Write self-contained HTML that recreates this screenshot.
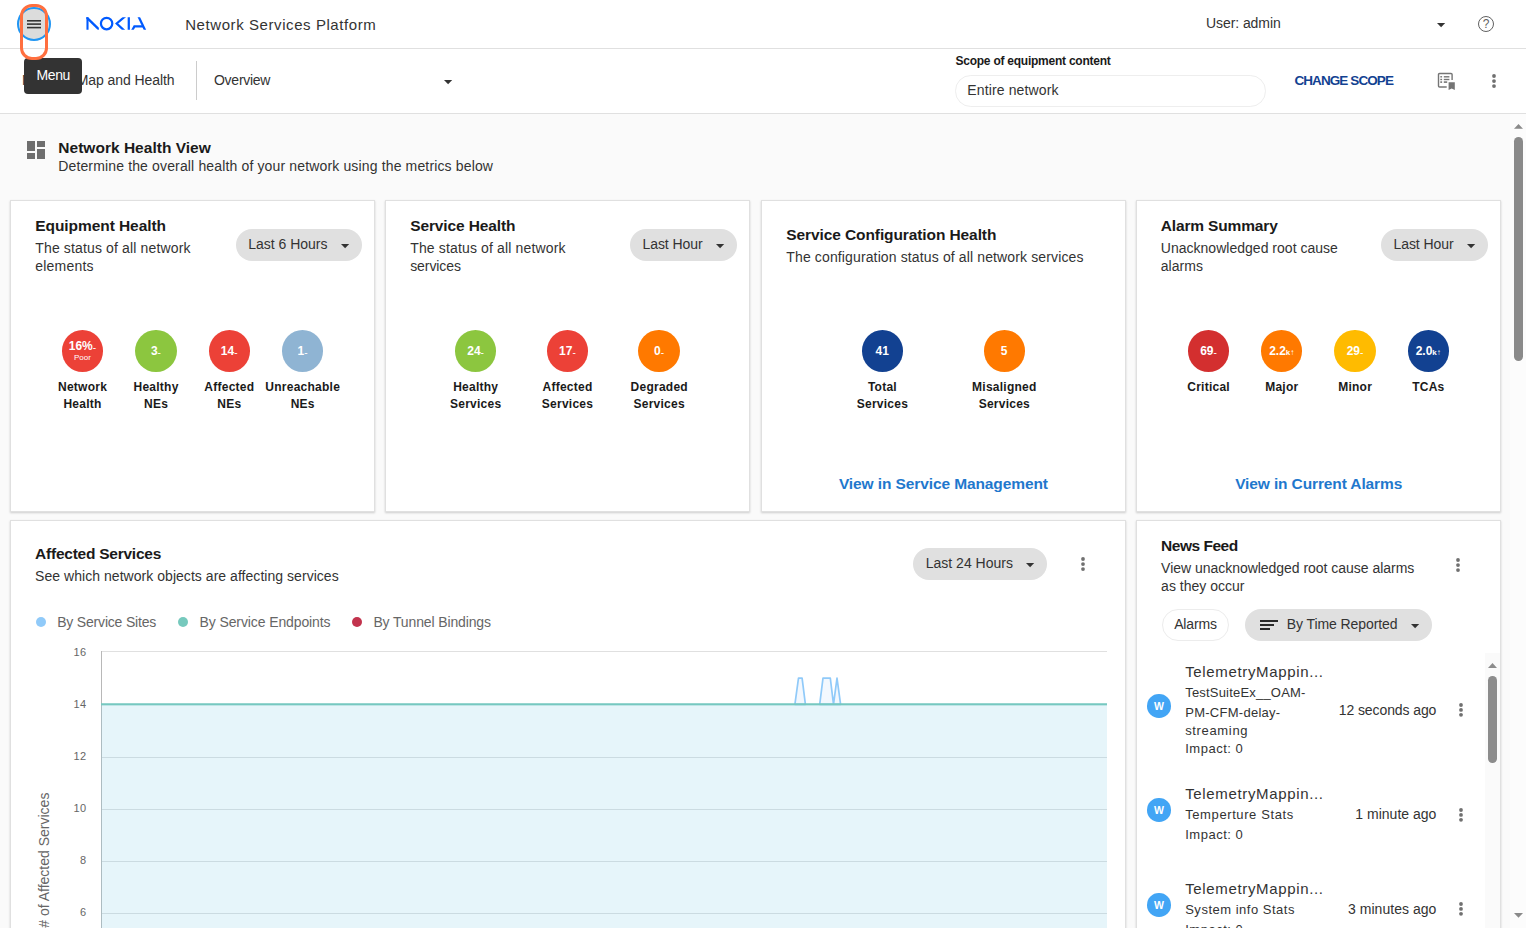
<!DOCTYPE html>
<html lang="en"><head><meta charset="utf-8"><title>Network Services Platform</title>
<style>
html,body{margin:0;padding:0}
html{overflow:hidden}
body{width:1526px;height:928px;overflow:hidden;position:relative;background:#fafafa;font-family:'Liberation Sans', sans-serif;}
#root{position:absolute;left:0;top:0;width:1526px;height:928px;overflow:hidden;background:#fafafa}
.t{position:absolute;white-space:pre;}
.a{position:absolute;}
.card{position:absolute;background:#fff;border:1px solid #e0e0e0;box-sizing:border-box;box-shadow:0 1px 2px rgba(0,0,0,.18);}
.pill{position:absolute;background:#e0e0e0;border-radius:16px;}
.circ{position:absolute;border-radius:50%;width:41.4px;height:42px;}
svg{position:absolute;overflow:visible}

</style></head><body><div id="root">
<div class="a" style="left:0;top:0;width:1526px;height:48px;background:#fff;border-bottom:1px solid #e0e0e0"></div>
<div class="a" style="left:0;top:49px;width:1526px;height:64px;background:#fff;border-bottom:1px solid #e0e0e0"></div>
<div class="a" style="left:17px;top:6.6px;width:34px;height:34px;box-sizing:border-box;border-radius:50%;background:#dcdcdc;border:2px solid #2196f3"></div>
<svg style="left:27px;top:19.8px" width="14" height="9" viewBox="0 0 14 9"><rect x="0" y="0" width="14" height="1.6" fill="#333"/><rect x="0" y="3.3" width="14" height="1.6" fill="#333"/><rect x="0" y="6.8" width="14" height="1.6" fill="#333"/></svg>
<div class="a" style="left:20px;top:4px;width:28px;height:55.8px;box-sizing:border-box;border:3px solid #ff6f3f;border-radius:12px;z-index:7"></div>
<svg role="img" aria-label="NOKIA" style="left:86px;top:17px" width="61" height="13.4" viewBox="0 0 61 13.4" fill="none" stroke="#005aff" stroke-width="2.25"><title>NOKIA</title>
<defs><clipPath id="lc"><rect x="0.2" y="0.2" width="60.2" height="12.55"/></clipPath><clipPath id="ln"><rect x="0.2" y="0.2" width="12.65" height="12.55"/></clipPath></defs>
<g clip-path="url(#ln)"><line x1="1.4" y1="-1" x2="1.4" y2="14"/><line x1="-0.4" y1="-0.6" x2="14" y2="13.5" stroke-width="2.35"/></g>
<circle cx="20.6" cy="6.6" r="5.7"/><g clip-path="url(#lc)">
<polyline points="39.6,-1 30.7,6.5 38.7,14" stroke-linejoin="miter"/>
<line x1="42.8" y1="-1" x2="42.8" y2="14"/>
<polyline points="45.9,14 48.4,9.35 57,9.35"/><line x1="52.3" y1="-1" x2="59.5" y2="14"/></g>
</svg>
<svg style="left:1436.80px;top:23.15px" width="8.2" height="4.3" viewBox="0 0 8.2 4.3"><polygon points="0,0 8.2,0 4.1,4.3" fill="#333"/></svg>
<div class="a" style="left:1477.8px;top:15.6px;width:16.6px;height:16.6px;box-sizing:border-box;border:1.7px solid #616161;border-radius:50%"></div>
<div class="a" style="left:24px;top:58px;width:58px;height:36px;background:#333;border-radius:4px;z-index:5"></div>
<div class="a" style="left:196px;top:61px;width:1px;height:39px;background:#ccc"></div>
<svg style="left:443.90px;top:79.85px" width="8.2" height="4.3" viewBox="0 0 8.2 4.3"><polygon points="0,0 8.2,0 4.1,4.3" fill="#333"/></svg>
<div class="a" style="left:954.5px;top:75px;width:311.5px;height:31.5px;box-sizing:border-box;background:#fff;border:1px solid #eeeeee;border-radius:15.75px"></div>
<svg style="left:1437px;top:72px" width="19" height="19" viewBox="0 0 19 19"><path d="M15.1 8V2.6a1.1 1.1 0 0 0-1.1-1.1H2.6a1.1 1.1 0 0 0-1.1 1.1v11.3a1.1 1.1 0 0 0 1.1 1.1H9.7" fill="none" stroke="#757575" stroke-width="1.4"/>
<g fill="#757575"><rect x="3.3" y="4.1" width="1.8" height="1.4"/><rect x="3.3" y="6.8" width="1.8" height="1.4"/><rect x="3.3" y="9.3" width="1.8" height="1.6"/><rect x="6.8" y="4.1" width="5.6" height="1.4"/><rect x="6.8" y="6.8" width="5.6" height="1.4"/><rect x="6.8" y="9.3" width="3.4" height="1.6"/>
<path d="M11.6 10.2h6.2v7.8l-3.1-1.5-3.1 1.5z"/></g></svg>
<svg style="left:1491px;top:72.95px" width="6" height="16.1" viewBox="0 0 6 16.1"><circle cx="3" cy="3" r="1.9" fill="#707070"/><circle cx="3" cy="8.05" r="1.9" fill="#707070"/><circle cx="3" cy="13.1" r="1.9" fill="#707070"/></svg>
<svg style="left:24px;top:138px" width="24" height="24" viewBox="0 0 24 24"><path d="M3 13h8V3H3v10zm0 8h8v-6H3v6zm10 0h8V11h-8v10zm0-18v6h8V3h-8z" fill="#6e6e6e"/></svg>
<div class="card" style="left:10px;top:200px;width:365px;height:312px"></div>
<div class="card" style="left:385px;top:200px;width:365px;height:312px"></div>
<div class="card" style="left:761px;top:200px;width:365px;height:312px"></div>
<div class="card" style="left:1136px;top:200px;width:365px;height:312px"></div>
<div class="pill" style="left:235.75px;top:229px;width:125.75px;height:32.00px"></div>
<svg style="left:340.80px;top:243.95px" width="8.2" height="4.3" viewBox="0 0 8.2 4.3"><polygon points="0,0 8.2,0 4.1,4.3" fill="#333"/></svg>
<div class="circ" style="left:61.70px;top:330px;background:#ec4137"></div>
<div class="circ" style="left:135.20px;top:330px;background:#8cc63f"></div>
<div class="circ" style="left:208.50px;top:330px;background:#ec4137"></div>
<div class="circ" style="left:281.90px;top:330px;background:#8fb4d3"></div>
<div class="pill" style="left:630px;top:229px;width:106.60px;height:32.00px"></div>
<svg style="left:715.70px;top:243.95px" width="8.2" height="4.3" viewBox="0 0 8.2 4.3"><polygon points="0,0 8.2,0 4.1,4.3" fill="#333"/></svg>
<div class="circ" style="left:454.90px;top:330px;background:#8cc63f"></div>
<div class="circ" style="left:546.70px;top:330px;background:#ec4137"></div>
<div class="circ" style="left:638.40px;top:330px;background:#ff7900"></div>
<div class="circ" style="left:861.60px;top:330px;background:#124191"></div>
<div class="circ" style="left:983.50px;top:330px;background:#ff7900"></div>
<div class="pill" style="left:1380.9px;top:229px;width:107.10px;height:32.00px"></div>
<svg style="left:1466.80px;top:243.95px" width="8.2" height="4.3" viewBox="0 0 8.2 4.3"><polygon points="0,0 8.2,0 4.1,4.3" fill="#333"/></svg>
<div class="circ" style="left:1187.80px;top:330px;background:#d32f2f"></div>
<div class="circ" style="left:1261.00px;top:330px;background:#ff7900"></div>
<div class="circ" style="left:1334.30px;top:330px;background:#ffbb00"></div>
<div class="circ" style="left:1407.50px;top:330px;background:#124191"></div>
<div class="card" style="left:10px;top:520px;width:1116px;height:440px"></div>
<div class="card" style="left:1136px;top:520px;width:365px;height:440px"></div>
<div class="pill" style="left:913.1px;top:548px;width:133.7px;height:32px"></div>
<svg style="left:1025.90px;top:562.85px" width="8.2" height="4.3" viewBox="0 0 8.2 4.3"><polygon points="0,0 8.2,0 4.1,4.3" fill="#333"/></svg>
<svg style="left:1079.9px;top:555.95px" width="6" height="16.1" viewBox="0 0 6 16.1"><circle cx="3" cy="3" r="1.9" fill="#707070"/><circle cx="3" cy="8.05" r="1.9" fill="#707070"/><circle cx="3" cy="13.1" r="1.9" fill="#707070"/></svg>
<div class="a" style="left:36px;top:616.7px;width:10px;height:10px;border-radius:50%;background:#90caf9"></div>
<div class="a" style="left:177.9px;top:616.7px;width:10px;height:10px;border-radius:50%;background:#76c9bd"></div>
<div class="a" style="left:351.8px;top:616.7px;width:10px;height:10px;border-radius:50%;background:#c2334d"></div>
<svg style="left:0;top:0" width="1526" height="928" viewBox="0 0 1526 928"><rect x="102" y="651" width="1005.00" height="1" fill="#e0e0e0"/><rect x="101" y="651" width="1" height="290" fill="#b8b8b8"/><rect x="101" y="704.3" width="1006.00" height="240" fill="#80cde6" fill-opacity="0.2"/><rect x="102" y="757" width="1005.00" height="1" fill="#cbdbe1"/><rect x="102" y="809" width="1005.00" height="1" fill="#cbdbe1"/><rect x="102" y="861" width="1005.00" height="1" fill="#cbdbe1"/><rect x="102" y="913" width="1005.00" height="1" fill="#cbdbe1"/><path d="M794.9 704.30L798.5 678.10L802.1 678.10L805.4 704.30Z M819.7 704.30L823 678.10L830.3 678.10L833.5 704.30L837 678.10L840.6 704.30Z" fill="#f3f8fe" stroke="#90caf9" stroke-width="1.7" stroke-linejoin="round"/><rect x="101" y="703.25" width="1006.00" height="2.1" fill="#76c8c0"/></svg>
<svg style="left:0;top:0" width="1526" height="928" viewBox="0 0 1526 928"><text transform="translate(49.3,792.6) rotate(-90)" text-anchor="end" font-family="Liberation Sans, sans-serif" font-size="14" fill="#666"># of Affected Services</text></svg>
<svg style="left:1455px;top:556.95px" width="6" height="16.1" viewBox="0 0 6 16.1"><circle cx="3" cy="3" r="1.9" fill="#707070"/><circle cx="3" cy="8.05" r="1.9" fill="#707070"/><circle cx="3" cy="13.1" r="1.9" fill="#707070"/></svg>
<div class="a" style="left:1162px;top:609px;width:66.7px;height:32px;box-sizing:border-box;border:1px solid #ececec;border-radius:16px;background:#fff"></div>
<div class="pill" style="left:1245px;top:609px;width:187px;height:32px"></div>
<svg style="left:1260px;top:620px" width="18" height="10" viewBox="0 0 18 10"><rect x="0" y="0" width="18" height="2" fill="#2a2a2a"/><rect x="0" y="4" width="14" height="2" fill="#2a2a2a"/><rect x="0" y="8" width="10" height="2" fill="#2a2a2a"/></svg>
<svg style="left:1410.70px;top:623.75px" width="8.2" height="4.3" viewBox="0 0 8.2 4.3"><polygon points="0,0 8.2,0 4.1,4.3" fill="#333"/></svg>
<div class="a" style="left:1485px;top:653px;width:15px;height:280px;background:#fafafa"></div>
<div class="a" style="left:1488px;top:675.9px;width:8.8px;height:87px;border-radius:4.4px;background:#8c8c8c"></div>
<svg style="left:1488px;top:662.9px" width="9" height="4.9" viewBox="0 0 9 4.9"><polygon points="0,4.9 9,4.9 4.5,0" fill="#8c8c8c"/></svg>
<div class="a" style="left:1147.2px;top:694.20px;width:23.6px;height:23.6px;border-radius:50%;background:#42a5f5"></div>
<svg style="left:1457.9px;top:702.2px" width="6" height="15.8" viewBox="0 0 6 15.8"><circle cx="3" cy="3" r="1.9" fill="#707070"/><circle cx="3" cy="7.9" r="1.9" fill="#707070"/><circle cx="3" cy="12.8" r="1.9" fill="#707070"/></svg>
<div class="a" style="left:1147.2px;top:798.20px;width:23.6px;height:23.6px;border-radius:50%;background:#42a5f5"></div>
<svg style="left:1457.9px;top:806.5px" width="6" height="15.8" viewBox="0 0 6 15.8"><circle cx="3" cy="3" r="1.9" fill="#707070"/><circle cx="3" cy="7.9" r="1.9" fill="#707070"/><circle cx="3" cy="12.8" r="1.9" fill="#707070"/></svg>
<div class="a" style="left:1147.2px;top:893.30px;width:23.6px;height:23.6px;border-radius:50%;background:#42a5f5"></div>
<svg style="left:1457.9px;top:901.1px" width="6" height="15.8" viewBox="0 0 6 15.8"><circle cx="3" cy="3" r="1.9" fill="#707070"/><circle cx="3" cy="7.9" r="1.9" fill="#707070"/><circle cx="3" cy="12.8" r="1.9" fill="#707070"/></svg>
<div class="a" style="left:1510px;top:114px;width:16px;height:814px;background:#fcfcfc"></div>
<div class="a" style="left:1514px;top:136.8px;width:9px;height:224.3px;border-radius:4.5px;background:#8a8a8a"></div>
<svg style="left:1514px;top:124.3px" width="9" height="4.8" viewBox="0 0 9 4.8"><polygon points="0,4.8 9,4.8 4.5,0" fill="#8a8a8a"/></svg>
<svg style="left:1514px;top:912.8px" width="9" height="4.8" viewBox="0 0 9 4.8"><polygon points="0,0 9,0 4.5,4.8" fill="#8a8a8a"/></svg>
<span class="t" style="left:185.20px;top:16px;font-size:15px;line-height:17px;color:#333;letter-spacing:0.578px;">Network Services Platform</span>
<span class="t" style="left:1206.00px;top:15px;font-size:14px;line-height:16px;color:#333;letter-spacing:-0.077px;">User: admin</span>
<span class="t" style="left:1482.76px;top:17px;font-size:12px;line-height:14px;color:#616161;">?</span>
<span class="t" style="left:22.00px;top:72px;font-size:14px;line-height:16px;color:#333;letter-spacing:-0.070px;">Network Map and Health</span>
<span class="t" style="left:36.40px;top:67px;font-size:14px;line-height:16px;color:#fff;letter-spacing:-0.344px;z-index:6;">Menu</span>
<span class="t" style="left:214.00px;top:72px;font-size:14px;line-height:16px;color:#333;letter-spacing:-0.266px;">Overview</span>
<span class="t" style="left:955.50px;top:54px;font-size:12px;line-height:14px;color:#1a1a1a;font-weight:700;letter-spacing:-0.242px;">Scope of equipment content</span>
<span class="t" style="left:967.30px;top:82px;font-size:14px;line-height:16px;color:#333;letter-spacing:0.132px;">Entire network</span>
<span class="t" style="left:1294.40px;top:73px;font-size:13.5px;line-height:15px;color:#124191;font-weight:700;letter-spacing:-0.903px;">CHANGE SCOPE</span>
<span class="t" style="left:58.30px;top:139px;font-size:15.5px;line-height:17px;color:#1a1a1a;font-weight:700;letter-spacing:0.017px;">Network Health View</span>
<span class="t" style="left:58.20px;top:158px;font-size:14px;line-height:16px;color:#333;letter-spacing:0.148px;">Determine the overall health of your network using the metrics below</span>
<span class="t" style="left:35.25px;top:217px;font-size:15.5px;line-height:17px;color:#1a1a1a;font-weight:700;letter-spacing:-0.068px;">Equipment Health</span>
<span class="t" style="left:35.25px;top:240px;font-size:14px;line-height:16px;color:#333;letter-spacing:0.146px;">The status of all network</span>
<span class="t" style="left:35.25px;top:258px;font-size:14px;line-height:16px;color:#333;letter-spacing:0.205px;">elements</span>
<span class="t" style="left:248.25px;top:236px;font-size:14px;line-height:16px;color:#333;letter-spacing:-0.011px;">Last 6 Hours</span>
<span class="t" style="left:68.71px;top:339px;font-size:12px;line-height:14px;color:#fff;font-weight:700;">16%<span style="font-size:10px;font-weight:400;position:relative;top:1px">-</span></span>
<span class="t" style="left:73.95px;top:353px;font-size:8px;line-height:9px;color:#fff;">Poor</span>
<span class="t" style="left:57.98px;top:380px;font-size:12px;line-height:14px;color:#1a1a1a;font-weight:700;letter-spacing:0.250px;">Network</span>
<span class="t" style="left:63.43px;top:397px;font-size:12px;line-height:14px;color:#1a1a1a;font-weight:700;letter-spacing:0.250px;">Health</span>
<span class="t" style="left:150.88px;top:344px;font-size:12px;line-height:14px;color:#fff;font-weight:700;">3<span style="font-size:10px;font-weight:400;position:relative;top:1px">-</span></span>
<span class="t" style="left:133.47px;top:380px;font-size:12px;line-height:14px;color:#1a1a1a;font-weight:700;letter-spacing:0.250px;">Healthy</span>
<span class="t" style="left:143.98px;top:397px;font-size:12px;line-height:14px;color:#1a1a1a;font-weight:700;letter-spacing:0.250px;">NEs</span>
<span class="t" style="left:220.85px;top:344px;font-size:12px;line-height:14px;color:#fff;font-weight:700;">14<span style="font-size:10px;font-weight:400;position:relative;top:1px">-</span></span>
<span class="t" style="left:204.32px;top:380px;font-size:12px;line-height:14px;color:#1a1a1a;font-weight:700;letter-spacing:0.250px;">Affected</span>
<span class="t" style="left:217.28px;top:397px;font-size:12px;line-height:14px;color:#1a1a1a;font-weight:700;letter-spacing:0.250px;">NEs</span>
<span class="t" style="left:297.58px;top:344px;font-size:12px;line-height:14px;color:#fff;font-weight:700;">1<span style="font-size:10px;font-weight:400;position:relative;top:1px">-</span></span>
<span class="t" style="left:265.33px;top:380px;font-size:12px;line-height:14px;color:#1a1a1a;font-weight:700;letter-spacing:0.250px;">Unreachable</span>
<span class="t" style="left:290.68px;top:397px;font-size:12px;line-height:14px;color:#1a1a1a;font-weight:700;letter-spacing:0.250px;">NEs</span>
<span class="t" style="left:410.20px;top:217px;font-size:15.5px;line-height:17px;color:#1a1a1a;font-weight:700;letter-spacing:-0.119px;">Service Health</span>
<span class="t" style="left:410.20px;top:240px;font-size:14px;line-height:16px;color:#333;letter-spacing:0.148px;">The status of all network</span>
<span class="t" style="left:410.20px;top:258px;font-size:14px;line-height:16px;color:#333;letter-spacing:-0.080px;">services</span>
<span class="t" style="left:642.40px;top:236px;font-size:14px;line-height:16px;color:#333;letter-spacing:-0.038px;">Last Hour</span>
<span class="t" style="left:467.25px;top:344px;font-size:12px;line-height:14px;color:#fff;font-weight:700;">24<span style="font-size:10px;font-weight:400;position:relative;top:1px">-</span></span>
<span class="t" style="left:453.17px;top:380px;font-size:12px;line-height:14px;color:#1a1a1a;font-weight:700;letter-spacing:0.250px;">Healthy</span>
<span class="t" style="left:450.03px;top:397px;font-size:12px;line-height:14px;color:#1a1a1a;font-weight:700;letter-spacing:0.250px;">Services</span>
<span class="t" style="left:559.05px;top:344px;font-size:12px;line-height:14px;color:#fff;font-weight:700;">17<span style="font-size:10px;font-weight:400;position:relative;top:1px">-</span></span>
<span class="t" style="left:542.52px;top:380px;font-size:12px;line-height:14px;color:#1a1a1a;font-weight:700;letter-spacing:0.250px;">Affected</span>
<span class="t" style="left:541.83px;top:397px;font-size:12px;line-height:14px;color:#1a1a1a;font-weight:700;letter-spacing:0.250px;">Services</span>
<span class="t" style="left:654.08px;top:344px;font-size:12px;line-height:14px;color:#fff;font-weight:700;">0<span style="font-size:10px;font-weight:400;position:relative;top:1px">-</span></span>
<span class="t" style="left:630.55px;top:380px;font-size:12px;line-height:14px;color:#1a1a1a;font-weight:700;letter-spacing:0.250px;">Degraded</span>
<span class="t" style="left:633.53px;top:397px;font-size:12px;line-height:14px;color:#1a1a1a;font-weight:700;letter-spacing:0.250px;">Services</span>
<span class="t" style="left:786.30px;top:226px;font-size:15.5px;line-height:17px;color:#1a1a1a;font-weight:700;letter-spacing:-0.098px;">Service Configuration Health</span>
<span class="t" style="left:786.30px;top:249px;font-size:14px;line-height:16px;color:#333;letter-spacing:0.131px;">The configuration status of all network services</span>
<span class="t" style="left:875.62px;top:344px;font-size:12px;line-height:14px;color:#fff;font-weight:700;">41</span>
<span class="t" style="left:867.91px;top:380px;font-size:12px;line-height:14px;color:#1a1a1a;font-weight:700;letter-spacing:0.250px;">Total</span>
<span class="t" style="left:856.73px;top:397px;font-size:12px;line-height:14px;color:#1a1a1a;font-weight:700;letter-spacing:0.250px;">Services</span>
<span class="t" style="left:1000.86px;top:344px;font-size:12px;line-height:14px;color:#fff;font-weight:700;">5</span>
<span class="t" style="left:972.07px;top:380px;font-size:12px;line-height:14px;color:#1a1a1a;font-weight:700;letter-spacing:0.250px;">Misaligned</span>
<span class="t" style="left:978.63px;top:397px;font-size:12px;line-height:14px;color:#1a1a1a;font-weight:700;letter-spacing:0.250px;">Services</span>
<span class="t" style="left:838.90px;top:475px;font-size:15.5px;line-height:17px;color:#1f78cd;font-weight:700;letter-spacing:-0.102px;">View in Service Management</span>
<span class="t" style="left:1160.80px;top:217px;font-size:15.5px;line-height:17px;color:#1a1a1a;font-weight:700;letter-spacing:-0.158px;">Alarm Summary</span>
<span class="t" style="left:1160.80px;top:240px;font-size:14px;line-height:16px;color:#333;letter-spacing:0.018px;">Unacknowledged root cause</span>
<span class="t" style="left:1160.80px;top:258px;font-size:14px;line-height:16px;color:#333;letter-spacing:0.037px;">alarms</span>
<span class="t" style="left:1393.40px;top:236px;font-size:14px;line-height:16px;color:#333;letter-spacing:-0.038px;">Last Hour</span>
<span class="t" style="left:1200.15px;top:344px;font-size:12px;line-height:14px;color:#fff;font-weight:700;">69<span style="font-size:10px;font-weight:400;position:relative;top:1px">-</span></span>
<span class="t" style="left:1187.28px;top:380px;font-size:12px;line-height:14px;color:#1a1a1a;font-weight:700;letter-spacing:0.250px;">Critical</span>
<span class="t" style="left:1269.13px;top:344px;font-size:12px;line-height:14px;color:#fff;font-weight:700;">2.2<span style="font-size:8px">k↑</span></span>
<span class="t" style="left:1265.19px;top:380px;font-size:12px;line-height:14px;color:#1a1a1a;font-weight:700;letter-spacing:0.250px;">Major</span>
<span class="t" style="left:1346.65px;top:344px;font-size:12px;line-height:14px;color:#fff;font-weight:700;">29<span style="font-size:10px;font-weight:400;position:relative;top:1px">-</span></span>
<span class="t" style="left:1338.16px;top:380px;font-size:12px;line-height:14px;color:#1a1a1a;font-weight:700;letter-spacing:0.250px;">Minor</span>
<span class="t" style="left:1415.63px;top:344px;font-size:12px;line-height:14px;color:#fff;font-weight:700;">2.0<span style="font-size:8px">k↑</span></span>
<span class="t" style="left:1412.15px;top:380px;font-size:12px;line-height:14px;color:#1a1a1a;font-weight:700;letter-spacing:0.250px;">TCAs</span>
<span class="t" style="left:1235.20px;top:475px;font-size:15.5px;line-height:17px;color:#1f78cd;font-weight:700;letter-spacing:-0.124px;">View in Current Alarms</span>
<span class="t" style="left:35.10px;top:545px;font-size:15.5px;line-height:17px;color:#1a1a1a;font-weight:700;letter-spacing:-0.243px;">Affected Services</span>
<span class="t" style="left:35.10px;top:568px;font-size:14px;line-height:16px;color:#333;letter-spacing:0.041px;">See which network objects are affecting services</span>
<span class="t" style="left:925.70px;top:555px;font-size:14px;line-height:16px;color:#333;letter-spacing:0.011px;">Last 24 Hours</span>
<span class="t" style="left:57.20px;top:614px;font-size:14px;line-height:16px;color:#666;letter-spacing:-0.189px;">By Service Sites</span>
<span class="t" style="left:199.50px;top:614px;font-size:14px;line-height:16px;color:#666;letter-spacing:-0.104px;">By Service Endpoints</span>
<span class="t" style="left:373.40px;top:614px;font-size:14px;line-height:16px;color:#666;letter-spacing:-0.133px;">By Tunnel Bindings</span>
<span class="t" style="left:73.55px;top:646px;font-size:11px;line-height:12px;color:#666;letter-spacing:0.300px;">16</span>
<span class="t" style="left:73.55px;top:698px;font-size:11px;line-height:12px;color:#666;letter-spacing:0.300px;">14</span>
<span class="t" style="left:73.55px;top:750px;font-size:11px;line-height:12px;color:#666;letter-spacing:0.300px;">12</span>
<span class="t" style="left:73.55px;top:802px;font-size:11px;line-height:12px;color:#666;letter-spacing:0.300px;">10</span>
<span class="t" style="left:79.97px;top:854px;font-size:11px;line-height:12px;color:#666;letter-spacing:0.300px;">8</span>
<span class="t" style="left:79.97px;top:906px;font-size:11px;line-height:12px;color:#666;letter-spacing:0.300px;">6</span>
<span class="t" style="left:1161.10px;top:537px;font-size:15.5px;line-height:17px;color:#1a1a1a;font-weight:700;letter-spacing:-0.486px;">News Feed</span>
<span class="t" style="left:1161.10px;top:560px;font-size:14px;line-height:16px;color:#333;letter-spacing:-0.029px;">View unacknowledged root cause alarms</span>
<span class="t" style="left:1161.10px;top:578px;font-size:14px;line-height:16px;color:#333;letter-spacing:0.011px;">as they occur</span>
<span class="t" style="left:1174.20px;top:616px;font-size:14px;line-height:16px;color:#333;letter-spacing:-0.153px;">Alarms</span>
<span class="t" style="left:1286.80px;top:616px;font-size:14px;line-height:16px;color:#333;letter-spacing:-0.084px;">By Time Reported</span>
<span class="t" style="left:1185.20px;top:663px;font-size:15px;line-height:17px;color:#333;letter-spacing:0.652px;">TelemetryMappin...</span>
<span class="t" style="left:1185.20px;top:685px;font-size:13px;line-height:15px;color:#333;letter-spacing:0.197px;">TestSuiteEx__OAM-</span>
<span class="t" style="left:1185.20px;top:705px;font-size:13px;line-height:15px;color:#333;letter-spacing:0.272px;">PM-CFM-delay-</span>
<span class="t" style="left:1185.20px;top:723px;font-size:13px;line-height:15px;color:#333;letter-spacing:0.653px;">streaming</span>
<span class="t" style="left:1185.20px;top:741px;font-size:13px;line-height:15px;color:#333;letter-spacing:0.516px;">Impact: 0</span>
<span class="t" style="left:1154.04px;top:700px;font-size:10.5px;line-height:12px;color:#fff;font-weight:700;">W</span>
<span class="t" style="left:1338.80px;top:702px;font-size:14px;line-height:16px;color:#333;letter-spacing:-0.097px;">12 seconds ago</span>
<span class="t" style="left:1185.20px;top:785px;font-size:15px;line-height:17px;color:#333;letter-spacing:0.652px;">TelemetryMappin...</span>
<span class="t" style="left:1185.20px;top:807px;font-size:13px;line-height:15px;color:#333;letter-spacing:0.600px;">Temperture Stats</span>
<span class="t" style="left:1185.20px;top:827px;font-size:13px;line-height:15px;color:#333;letter-spacing:0.516px;">Impact: 0</span>
<span class="t" style="left:1154.04px;top:804px;font-size:10.5px;line-height:12px;color:#fff;font-weight:700;">W</span>
<span class="t" style="left:1355.30px;top:806px;font-size:14px;line-height:16px;color:#333;letter-spacing:0.013px;">1 minute ago</span>
<span class="t" style="left:1185.20px;top:880px;font-size:15px;line-height:17px;color:#333;letter-spacing:0.652px;">TelemetryMappin...</span>
<span class="t" style="left:1185.20px;top:902px;font-size:13px;line-height:15px;color:#333;letter-spacing:0.509px;">System info Stats</span>
<span class="t" style="left:1185.20px;top:922px;font-size:13px;line-height:15px;color:#333;letter-spacing:0.516px;">Impact: 0</span>
<span class="t" style="left:1154.04px;top:899px;font-size:10.5px;line-height:12px;color:#fff;font-weight:700;">W</span>
<span class="t" style="left:1348.00px;top:901px;font-size:14px;line-height:16px;color:#333;letter-spacing:0.037px;">3 minutes ago</span>
</div></body></html>
